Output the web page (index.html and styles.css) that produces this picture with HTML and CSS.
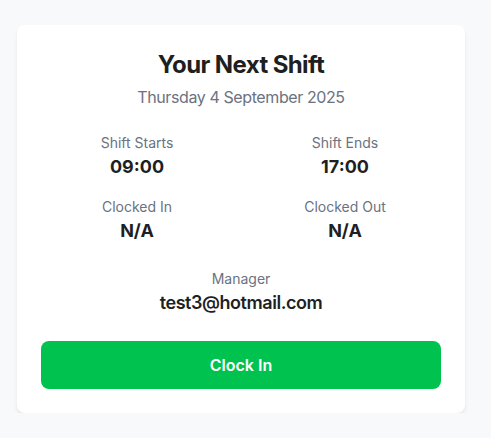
FILE: index.html
```html
<!DOCTYPE html>
<html lang="en">
<head>
<meta charset="utf-8">
<title>Your Next Shift</title>
<link rel="stylesheet" href="styles.css">
</head>
<body>
<main class="page">
  <section class="card">
    <h1 class="title">Your Next Shift</h1>
    <p class="date">Thursday 4 September 2025</p>
    <div class="grid">
      <div class="item">
        <div class="label">Shift Starts</div>
        <div class="value">09:00</div>
      </div>
      <div class="item">
        <div class="label">Shift Ends</div>
        <div class="value">17:00</div>
      </div>
      <div class="item">
        <div class="label">Clocked In</div>
        <div class="value">N/A</div>
      </div>
      <div class="item">
        <div class="label">Clocked Out</div>
        <div class="value">N/A</div>
      </div>
    </div>
    <div class="manager">
      <div class="label">Manager</div>
      <div class="email">test3@hotmail.com</div>
    </div>
    <button class="btn" type="button">Clock In</button>
  </section>
</main>
</body>
</html>
```

FILE: styles.css
```css
* { box-sizing: border-box; }
html, body {
  margin: 0;
  padding: 0;
  background: #f8f9fb;
  font-family: Inter, "Noto Sans", sans-serif;
  color: #1f1f1f;
}
.page {
  padding: 25px 0 0 17px;
}
.card {
  width: 448px;
  background: #fff;
  border-radius: 8px;
  box-shadow: 0 4px 6px -1px rgba(0,0,0,0.08), 0 2px 4px -2px rgba(0,0,0,0.06);
  padding: 24px;
  display: flex;
  flex-direction: column;
  align-items: stretch;
  text-align: center;
}
.title {
  margin: 0;
  font-size: 24px;
  line-height: 32px;
  font-weight: 700;
  letter-spacing: -0.025em;
  color: #1f1f1f;
}
.date {
  margin: 4px 0 0;
  font-size: 16px;
  line-height: 24px;
  letter-spacing: -0.025em;
  color: #6b7280;
}
.grid {
  margin-top: 24px;
  display: grid;
  grid-template-columns: 1fr 1fr;
  column-gap: 16px;
  row-gap: 16px;
}
.item {
  display: flex;
  flex-direction: column;
  align-items: center;
}
.label {
  font-size: 14px;
  line-height: 20px;
  color: #6b7280;
}
.value {
  font-size: 18px;
  line-height: 28px;
  font-weight: 700;
  color: #1f1f1f;
}
.manager {
  margin-top: 24px;
  display: flex;
  flex-direction: column;
  align-items: center;
}
.email {
  font-size: 18px;
  line-height: 28px;
  font-weight: 600;
  letter-spacing: -0.025em;
  color: #1f1f1f;
}
.btn {
  margin-top: 24px;
  height: 48px;
  border: none;
  border-radius: 8px;
  background: #00c24e;
  color: #fff;
  font-family: Inter, sans-serif;
  font-size: 16px;
  font-weight: 600;
  line-height: 24px;
  padding: 12px 16px;
}
```
